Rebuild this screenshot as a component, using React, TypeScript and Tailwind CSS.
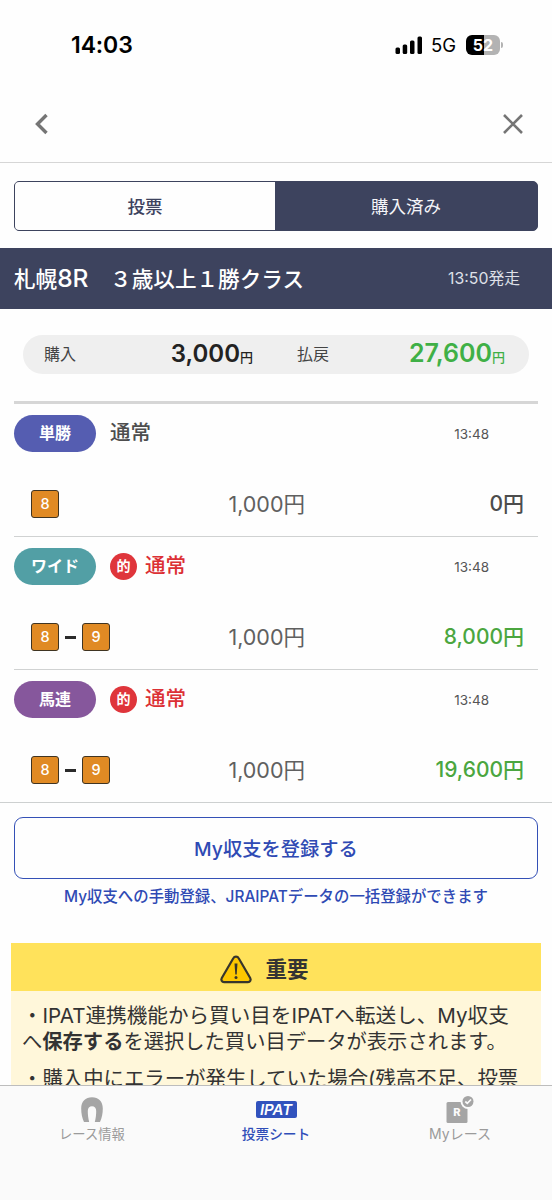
import { Fragment } from "react";

type Bet = {
    type: string;
    color: string;
    hit: boolean;
    horses: number[];
    payout: string;
}

const bets: Bet[] = [
    { type: "単勝", color: "bg-[#555db1]", hit: false, horses: [8], payout: "0" },
    { type: "ワイド", color: "bg-[#529fa5]", hit: true, horses: [8, 9], payout: "8,000" },
    { type: "馬連", color: "bg-[#86579c]", hit: true, horses: [8, 9], payout: "19,600" },
]

function StatusBar() {
    return (
        <div className="h-[85px] pt-[4px] pl-[71px] pr-[49px] flex items-center justify-between text-black">
            <div className="text-[23px] leading-7 font-semibold tracking-[-0.1px]">14:03</div>
            <div className="flex items-center">
                <svg width="28" height="18" viewBox="0 0 28 18" className="mr-[8px]">
                    <rect x="0.5" y="11.5" width="4.5" height="6.5" rx="1.5" />
                    <rect x="7.7" y="8.5" width="4.5" height="9.5" rx="1.5" />
                    <rect x="15" y="4.5" width="4.5" height="13.5" rx="1.5" />
                    <rect x="22.5" y="0.5" width="4.5" height="17.5" rx="1.5" />
                </svg>
                <span className="text-[18.5px] leading-6 mr-[10px]">5G</span>
                <div className="w-[34px] h-5 rounded-[6px] bg-[linear-gradient(90deg,#000_53%,#b3b3b3_53%)] text-white text-[16px] leading-5 font-bold text-center">52</div>
                <div className="w-[2px] h-[6px] ml-[1px] rounded-r-full bg-[#b3b3b3]"></div>
            </div>
        </div>
    )
}

function NavBar() {
    return (
        <div className="h-[78px] px-[28px] flex items-center justify-between border-b border-[#d6d6d6]">
            <svg width="28" height="28" viewBox="0 0 28 28" fill="none" stroke="#757575" strokeWidth="3.4">
                <path d="M18.5 5 L9.5 14 L18.5 23" />
            </svg>
            <svg width="22" height="22" viewBox="0 0 22 22" fill="none" stroke="#757575" strokeWidth="2.6">
                <path d="M2 2 L20 20 M20 2 L2 20" />
            </svg>
        </div>
    )
}

function HorseNumber({ value }: { value: number }) {
    return (
        <div className="w-[28px] h-[28px] rounded-[3px] border-[1.5px] border-[#3f3422] bg-[#e08a24] text-[14.5px] leading-[26px] text-white text-center font-medium">{value}</div>
    )
}

function BetRow({ bet, last }: { bet: Bet, last: boolean }) {
    return (
        <div className={last ? "h-[132px] mx-[14px]" : "h-[133px] mx-[14px] border-b border-[#d0d2d2]"}>
            <div className="h-[59px] flex items-center">
                <div className={`w-[82px] h-[37px] rounded-full text-white text-[16px] leading-[36px] font-semibold text-center ${bet.color}`}>{bet.type}</div>
                {bet.hit && (
                    <div className="size-[27px] ml-[14px] -mr-[6px] rounded-full bg-[#df353b] text-white text-[14px] leading-[26px] font-bold text-center">的</div>
                )}
                <div className={`ml-[14px] -mt-[2px] text-[20.5px] leading-6 font-medium ${bet.hit ? "text-[#dc3035]" : "text-[#4e4e4e]"}`}>通常</div>
                <div className="ml-auto mr-[49px] text-[13.5px] leading-5 text-[#555]">13:48</div>
            </div>
            <div className="h-[58px] mt-[12px] pl-[17px] pr-[14px] flex items-center">
                <div className="w-[119px] flex items-center">
                    {bet.horses.map((h, i) => (
                        <Fragment key={i}>
                            {i > 0 && <div className="w-[11px] h-[3px] mx-[6px] bg-[#2b2b2b]"></div>}
                            <HorseNumber value={h} />
                        </Fragment>
                    ))}
                </div>
                <div className="w-[155px] text-right text-[21.5px] leading-7 text-[#606060]">1,000円</div>
                <div className={`ml-auto text-[21px] leading-7 font-medium ${bet.hit ? "text-[#4ba63f]" : "text-[#4c4c4c]"}`}>{bet.payout}円</div>
            </div>
        </div>
    )
}

function Notice() {
    return (
        <div className="mt-[36px] mx-[11px] h-[142px] overflow-hidden bg-[#fff7da] text-[#333]">
            <div className="h-[48px] pr-[24px] pt-[4px] bg-[#ffe25b] flex items-center justify-center">
                <svg width="34" height="29" viewBox="0 0 34 29" className="mr-[12px]">
                    <path d="M14.3 3.2 C15.4 1.2 18.6 1.2 19.7 3.2 L31.2 23 C32.3 25 31.2 27.2 29 27.2 H5 C2.8 27.2 1.7 25 2.8 23 Z" fill="#fdc700" stroke="#37352c" strokeWidth="2.2" strokeLinejoin="round" />
                    <path d="M15.5 8.5 H18.5 L17.7 19.5 H16.3 Z" fill="#37352c" />
                    <circle cx="17" cy="22.6" r="1.5" fill="#37352c" />
                </svg>
                <span className="text-[21.5px] leading-7 font-bold">重要</span>
            </div>
            <div className="pl-[11px] pt-[12px] text-[20.6px] leading-[26px] whitespace-nowrap">
                <p>・IPAT連携機能から買い目をIPATへ転送し、My収支<br /><span className="text-[20.3px]">へ<b>保存する</b>を選択した買い目データが表示されます。</span></p>
                <p className="mt-[11px] text-[20.4px]">・購入中にエラーが発生していた場合(残高不足、投票</p>
            </div>
        </div>
    )
}

function TabBar() {
    return (
        <div className="h-[115px] border-t-[1.5px] border-[#bdbdbd] bg-[#fafafa] grid grid-cols-3 text-[14px] leading-5 text-[#9b9b9b]">
            <div className="flex flex-col items-center">
                <svg width="22" height="25" viewBox="0 0 22 25" className="mt-[11px]">
                    <path d="M3 25 C1.2 21 0.2 16.5 0.2 11.5 C0.2 4.5 4.5 0.3 11 0.3 C17.5 0.3 21.8 4.5 21.8 11.5 C21.8 16.5 20.8 21 19 25 H13.8 C14.8 21.5 15.2 17.5 15.2 14 C15.2 11 13.6 9.3 11 9.3 C8.4 9.3 6.8 11 6.8 14 C6.8 17.5 7.2 21.5 8.2 25 Z" fill="#a5a5a5" />
                </svg>
                <span className="mt-[2px] text-[13.3px]">レース情報</span>
            </div>
            <div className="flex flex-col items-center text-[#2f4db8]">
                <div className="mt-[15px] w-[41px] h-[17px] rounded-[2px] bg-[#3152bd] text-white text-[15px] leading-[17px] font-semibold italic text-center">IPAT</div>
                <span className="mt-[6px] text-[13.7px] font-medium">投票シート</span>
            </div>
            <div className="flex flex-col items-center">
                <svg width="28" height="28" viewBox="0 0 28 28" className="mt-[9px]">
                    <rect x="0.5" y="7" width="21" height="21" rx="1.5" fill="#a5a5a5" />
                    <circle cx="22" cy="6.5" r="7.5" fill="#fafafa" />
                    <circle cx="22" cy="6.5" r="5.5" fill="#a5a5a5" />
                    <path d="M19.3 6.5 L21.3 8.3 L25 4.5" stroke="#fafafa" strokeWidth="1.7" fill="none" />
                    <text x="11" y="21.3" textAnchor="middle" fontSize="11" fontWeight="800" fill="#fafafa">R</text>
                </svg>
                <span className="mt-[1px]">Myレース</span>
            </div>
        </div>
    )
}

export default function App() {
    return (
        <div className="w-[552px] h-[1200px] overflow-hidden bg-[#fefefe] font-['Inter','Noto_Sans_CJK_JP',sans-serif]">
            <StatusBar />
            <NavBar />
            <div className="h-[50px] mt-[18px] mx-[14px] flex rounded-[5px] overflow-hidden border-[1.5px] border-[#3d435e] bg-[#3d435e] text-[17.5px] leading-6">
                <div className="w-[260px] pt-[2px] flex items-center justify-center font-medium bg-[#fefefe] text-[#3d435e]">投票</div>
                <div className="flex-1 pt-[2px] flex items-center justify-center text-[#f4f4f8]">購入済み</div>
            </div>
            <div className="h-[61px] mt-[17px] pl-[14px] pr-[32px] flex items-center justify-between bg-[#3d435e] text-white whitespace-pre">
                <div className="text-[21.6px] leading-7 font-medium">札幌<span className="text-[24.5px]">8R</span>　３歳以上１勝クラス</div>
                <div className="text-[15.8px] leading-5 text-[#dfe0e8]">13:50発走</div>
            </div>
            <div className="h-[39px] mt-[26px] ml-[23px] mr-[23px] pl-[21px] pr-[24px] flex items-center rounded-full bg-[#efefef] text-[16px] leading-6 text-[#444]">
                <div className="-mt-[2px]">購入</div>
                <div className="ml-auto mt-[2px] w-[120px] text-right text-[#222]"><span className="text-[24px] font-semibold">3,000</span><span className="text-[13px] font-medium">円</span></div>
                <div className="-mt-[2px] ml-[44px]">払戻</div>
                <div className="w-[176px] mt-[1px] text-right text-[#3fb046]"><span className="text-[25px] font-semibold">27,600</span><span className="text-[13px] font-medium">円</span></div>
            </div>
            <div className="h-[3px] mt-[27px] mx-[14px] bg-[#d6d6d6]"></div>
            {bets.map((bet, i) => (
                <BetRow key={i} bet={bet} last={i === bets.length - 1} />
            ))}
            <div className="h-px bg-[#cdd0d0]"></div>
            <div className="h-[62px] mt-[14px] mx-[14px] pt-[3px] flex items-center justify-center rounded-[9px] border-[1.5px] border-[#3450b6] text-[19.3px] font-medium text-[#2f4ab4]">My収支を登録する</div>
            <div className="mt-[8px] text-center text-[15.4px] leading-5 font-medium text-[#2f4ab4]">My収支への手動登録、JRAIPATデータの一括登録ができます</div>
            <Notice />
            <TabBar />
        </div>
    )
}
